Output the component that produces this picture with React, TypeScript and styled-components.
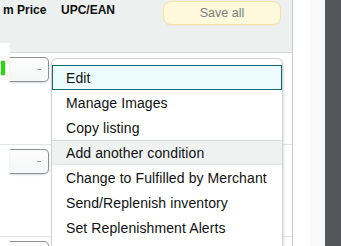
import React from "react";
import styled, { createGlobalStyle } from "styled-components";

const Global = createGlobalStyle`
  html, body { margin: 0; padding: 0; }
  body {
    width: 341px; height: 246px; overflow: hidden; background: #fff;
    font-family: "Liberation Sans", Arial, sans-serif;
    color: #0f1111;
  }
`;

const Page = styled.div`
  display: flex;
  width: 341px;
  height: 246px;
  overflow: hidden;
`;

const Table = styled.div`
  position: relative;
  flex: none;
  width: 292px;
  border-right: 1px solid #c8c8c8;
  display: flex;
  flex-direction: column;
`;

const Header = styled.div`
  position: relative;
  flex: none;
  height: 53px;
  box-sizing: border-box;
  background: #eeefef;
  border-bottom: 1px solid #d5d9d9;
  display: flex;
  align-items: flex-start;
  padding: 1px 11px 0 3px;

  &::before {
    content: "";
    position: absolute;
    left: 0;
    bottom: -1px;
    width: 10px;
    height: 10px;
    background: #fff;
  }
`;

const HeaderLabel = styled.div<{ $width?: number }>`
  width: ${(p) => (p.$width ? `${p.$width}px` : "auto")};
  flex: none;
  font-size: 12px;
  font-weight: 700;
  line-height: 16px;
  margin-top: 1px;
  white-space: nowrap;
`;

const SaveButton = styled.button`
  margin-left: auto;
  width: 118px;
  height: 24px;
  box-sizing: border-box;
  border: 1px solid #f3e4a4;
  border-radius: 8px;
  background: #fef8dc;
  color: #7d7d7d;
  font-family: inherit;
  font-size: 12.5px;
  padding: 0;
  box-shadow: 0 1px 1px rgba(200, 180, 100, 0.15);
`;

const Row = styled.div`
  flex: none;
  height: 92px;
  box-sizing: border-box;
  border-bottom: 1px solid #e3e6e6;
  display: grid;
  grid-template-columns: 10px 39px 1fr;
  align-items: start;
  padding-top: 4px;
`;

const Gutter = styled.div`
  padding-left: 1px;
  padding-top: 4px;
`;

const Marker = styled.div`
  width: 4px;
  height: 14px;
  background: #22dc00;
`;

const Select = styled.div`
  height: 25px;
  box-sizing: border-box;
  border: 1px solid #8d9096;
  border-left: none;
  border-radius: 0 5px 5px 0;
  background: linear-gradient(#fcfcfc, #f6f7f7);
  box-shadow: 0 1px 2px rgba(15, 17, 17, 0.15);
  display: flex;
  align-items: center;
  justify-content: flex-end;
  padding-right: 7px;
`;

const Caret = styled.span`
  width: 4px;
  height: 1px;
  background: #8a9aa8;
`;

const Menu = styled.ul`
  position: absolute;
  left: 51px;
  top: 58px;
  width: 232px;
  box-sizing: border-box;
  margin: 0;
  padding: 6px 0 10px;
  list-style: none;
  background: #fff;
  border: 1px solid #cfd2d2;
  border-radius: 6px 6px 0 0;
  box-shadow: 1px 1px 3px rgba(0, 0, 0, 0.12);
`;

const Item = styled.li<{ $state?: "active" | "hover" }>`
  height: 25px;
  box-sizing: border-box;
  padding-left: 13px;
  font-size: 14px;
  letter-spacing: 0.1px;
  line-height: 24px;
  white-space: nowrap;
  border: 1px solid transparent;
  ${(p) =>
    p.$state === "active"
      ? "background: #edfdff; border-color: #146c7b;"
      : p.$state === "hover"
      ? "background: #f0f2f2; border-top-color: #d8dbdb; border-bottom-color: #e3e6e6;"
      : ""}
`;

const Spacer = styled.div`
  flex: none;
  width: 17px;
  background: #fff;
`;

const LightStrip = styled.div`
  flex: none;
  width: 15px;
  background: #f9f9f9;
`;

const DarkStrip = styled.div`
  flex: 1;
  background: #55565b;
`;

const items: { label: string; state?: "active" | "hover" }[] = [
  { label: "Edit", state: "active" },
  { label: "Manage Images" },
  { label: "Copy listing" },
  { label: "Add another condition", state: "hover" },
  { label: "Change to Fulfilled by Merchant" },
  { label: "Send/Replenish inventory" },
  { label: "Set Replenishment Alerts" },
];

export default function App() {
  return (
    <>
      <Global />
      <Page>
        <Table>
          <Header>
            <HeaderLabel $width={58}>m Price</HeaderLabel>
            <HeaderLabel>UPC/EAN</HeaderLabel>
            <SaveButton>Save all</SaveButton>
          </Header>
          {[0, 1, 2].map((i) => (
            <Row key={i}>
              <Gutter>{i === 0 && <Marker />}</Gutter>
              <Select>
                <Caret />
              </Select>
            </Row>
          ))}
          <Menu>
            {items.map((it) => (
              <Item key={it.label} $state={it.state}>
                {it.label}
              </Item>
            ))}
          </Menu>
        </Table>
        <Spacer />
        <LightStrip />
        <DarkStrip />
      </Page>
    </>
  );
}
